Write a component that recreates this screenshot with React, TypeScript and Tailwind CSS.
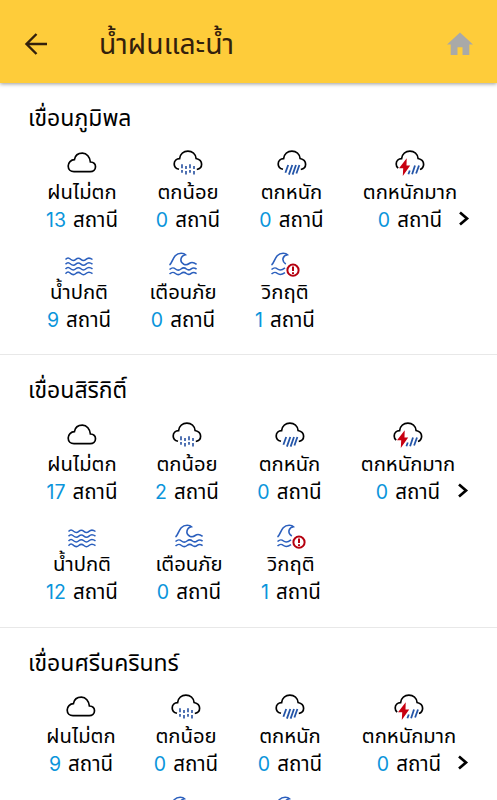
import React from 'react';

type IconName = 'cloud' | 'drizzle' | 'rain' | 'storm' | 'calm' | 'wave' | 'crisis';

interface Station {
  icon: IconName;
  count: number;
  cell: string;
}

interface Dam {
  name: string;
  rain: Station[];
  water: Station[];
}

const LABELS: Record<IconName, string> = {
  cloud: 'ฝนไม่ตก',
  drizzle: 'ตกน้อย',
  rain: 'ตกหนัก',
  storm: 'ตกหนักมาก',
  calm: 'น้ำปกติ',
  wave: 'เตือนภัย',
  crisis: 'วิกฤติ',
};

const dams: Dam[] = [
  {
    name: 'เขื่อนภูมิพล',
    rain: [
      { icon: 'cloud', count: 13, cell: 'w-[106px]' },
      { icon: 'drizzle', count: 0, cell: 'w-[106px]' },
      { icon: 'rain', count: 0, cell: 'w-[101px]' },
      { icon: 'storm', count: 0, cell: 'ml-5 w-24' },
    ],
    water: [
      { icon: 'calm', count: 9, cell: 'w-[100px]' },
      { icon: 'wave', count: 0, cell: 'w-[108px]' },
      { icon: 'crisis', count: 1, cell: 'w-24' },
    ],
  },
  {
    name: 'เขื่อนสิริกิติ์',
    rain: [
      { icon: 'cloud', count: 17, cell: 'w-[106px]' },
      { icon: 'drizzle', count: 2, cell: 'w-[104px]' },
      { icon: 'rain', count: 0, cell: 'w-[101px]' },
      { icon: 'storm', count: 0, cell: 'ml-5 w-24' },
    ],
    water: [
      { icon: 'calm', count: 12, cell: 'w-[106px]' },
      { icon: 'wave', count: 0, cell: 'w-[108px]' },
      { icon: 'crisis', count: 1, cell: 'w-24' },
    ],
  },
  {
    name: 'เขื่อนศรีนครินทร์',
    rain: [
      { icon: 'cloud', count: 9, cell: 'w-[104px]' },
      { icon: 'drizzle', count: 0, cell: 'w-[106px]' },
      { icon: 'rain', count: 0, cell: 'w-[102px]' },
      { icon: 'storm', count: 0, cell: 'ml-5 w-24' },
    ],
    water: [
      { icon: 'calm', count: 9, cell: 'w-[100px]' },
      { icon: 'wave', count: 0, cell: 'w-[105px]' },
      { icon: 'crisis', count: 1, cell: 'w-[106px]' },
    ],
  },
];

const StationIcon: React.FC<{ name: IconName }> = ({ name }) => (
  <svg width="30" height="26" viewBox="0 0 30 26" fill="none" strokeWidth="1.7" className="overflow-visible">
    {name === 'cloud' && (
      <path
        d="M7 21.6H23.2C26.2 21.6 28.5 19.7 28.5 16.8C28.5 13.9 26.4 12.2 23.4 12C22.9 7.1 19.8 3.2 15.4 3.2C11.2 3.2 8.1 5.7 7.4 9.7C4 9.7 1.2 12.6 1.2 15.9C1.2 19.3 3.7 21.6 7 21.6Z"
        stroke="#000"
      />
    )}
    {(name === 'drizzle' || name === 'rain') && (
      <path
        d="M6 19.3C3.2 18.6 1.2 16.6 1.2 13.9C1.2 10.9 3.6 8.7 6.6 8.6C7.2 4.2 10.6 1.2 14.9 1.2C19.3 1.2 22.6 4.2 23.1 8.5C26.4 9.2 28.6 11.4 28.6 14.3C28.6 17 26.7 19 23.8 19.5"
        stroke="#000"
      />
    )}
    {name === 'drizzle' && (
      <path
        d="M9 14.3v4M9 20v2.7M13 16v3M13 21v3.5M17 14.3v4M17 20v2.7M21 16v3M21 21v3.5"
        stroke="#3159a5"
        strokeWidth="1.7"
      />
    )}
    {name === 'rain' && (
      <path d="M11.2 15L8.4 22.8M15.3 15L11.9 24.6M19 15L15.6 24.6M22.4 15L19.4 23.5" stroke="#2455a8" strokeWidth="1.8" />
    )}
    {name === 'storm' && (
      <>
        <path
          d="M3.2 18.2C1.9 17.2 1.2 15.6 1.2 13.9C1.2 10.9 3.6 8.7 6.6 8.6C7.2 4.2 10.6 1.2 14.9 1.2C19.3 1.2 22.6 4.2 23.1 8.5C26.4 9.2 28.6 11.4 28.6 14.3C28.6 17 27.2 18.8 25 19.5"
          stroke="#000"
        />
        <path d="M11.7 8.3L4 18.2H8.2L7.8 26L15.2 15.5H11.5Z" fill="#c80010" />
        <path d="M14.8 20.5L13.4 24.2M20 15.5L17.1 24.2M24 15.5L21.1 23.5" stroke="#2455a8" strokeWidth="1.8" />
      </>
    )}
    {name === 'calm' && (
      <path
        d="M1.5 7.6C3.4 5.5 4.7 5.5 6.6 7.3C8.6 9.1 10 9.1 11.8 7.4C13.7 5.7 15 5.7 16.9 7.4C18.8 9.1 20.2 9.1 22 7.4C23.9 5.6 25.9 5.6 28.5 7.5M1.5 12.3C3.4 10.2 4.7 10.2 6.6 12C8.6 13.8 10 13.8 11.8 12.1C13.7 10.4 15 10.4 16.9 12.1C18.8 13.8 20.2 13.8 22 12.1C23.9 10.3 25.9 10.3 28.5 12.2M1.5 17C3.4 14.9 4.7 14.9 6.6 16.7C8.6 18.5 10 18.5 11.8 16.8C13.7 15.1 15 15.1 16.9 16.8C18.8 18.5 20.2 18.5 22 16.8C23.9 15 25.9 15 28.5 16.9M1.5 21.7C3.4 19.6 4.7 19.6 6.6 21.4C8.6 23.2 10 23.2 11.8 21.5C13.7 19.8 15 19.8 16.9 21.5C18.8 23.2 20.2 23.2 22 21.5C23.9 19.7 25.9 19.7 28.5 21.6"
        stroke="#2b5fbd"
        strokeWidth="1.5"
      />
    )}
    {name === 'wave' && (
      <path
        d="M1.5 13C4.8 10.8 4.8 1.2 13.2 1.2C15.2 1.2 16.6 1.6 17.5 2.7C12.6 3.6 11 9.8 15.8 12.2C18.4 13.4 19.8 12.6 21.2 11.5C23.2 9.9 25.8 10.2 28.6 12.3M1.5 17.5C4.1 15.2 5.3 15.2 7.5 17C9.6 18.7 11 18.6 13 17C15.1 15.3 16.4 15.3 18.4 17C20.3 18.6 21.5 18.3 23.2 16.8C25 15.4 26.6 15.7 28.6 17.2M1.5 22C4.1 19.7 5.3 19.7 7.5 21.5C9.6 23.2 11 23.1 13 21.5C15.1 19.8 16.4 19.8 18.4 21.5C20.3 23.1 21.5 22.8 23.2 21.3C25 19.9 26.6 20.2 28.6 21.7"
        stroke="#2b5fbd"
        strokeWidth="1.6"
      />
    )}
    {name === 'crisis' && (
      <>
        <path
          d="M1.5 13C4.8 10.8 4.8 1.2 13.2 1.2C15.2 1.2 16.6 1.6 17.5 2.7C12.6 3.6 11 8.8 15.8 12M1.5 17.5C4.1 15.2 5.3 15.2 7.5 17C9.6 18.7 11.5 18.6 15 15.8M1.5 22C4.1 19.7 5.3 19.7 7.5 21.5C9.6 23.2 11.8 22.8 15 20.7"
          stroke="#2b5fbd"
          strokeWidth="1.6"
        />
        <circle cx="23" cy="18.2" r="5.6" fill="#fff" stroke="#b5000f" strokeWidth="2" />
        <path d="M23 14.5v4.5M23 20.2v1.8" stroke="#b5000f" strokeWidth="2" />
      </>
    )}
  </svg>
);

const StationCell: React.FC<{ station: Station }> = ({ station }) => (
  <div className={`flex shrink-0 flex-col items-center whitespace-nowrap ${station.cell}`}>
    <StationIcon name={station.icon} />
    <div className="h-7 text-[20.3px] leading-7">{LABELS[station.icon]}</div>
    <div className="flex h-7 gap-[7px] leading-7">
      <span className="text-[19.5px] text-[#0b95db]">{station.count}</span>
      <span className="text-[20.5px]">สถานี</span>
    </div>
  </div>
);

const DamSection: React.FC<{ dam: Dam }> = ({ dam }) => (
  <section className="h-[272.3px] border-b border-[#e8e8e8] px-7">
    <h2 className="h-[66.5px] pt-[19px] text-[23px] leading-8">{dam.name}</h2>
    <div className="flex h-[102px] pl-px [&>div>svg]:mb-0.5">
      {dam.rain.map((s) => (
        <StationCell key={s.icon} station={s} />
      ))}
      <svg width="12" height="15" viewBox="0 0 12 15" className="mt-[61px] ml-auto shrink-0" fill="none">
        <path d="M2 1.5L9 7.5L2 13.5" stroke="#000" strokeWidth="2.7" />
      </svg>
    </div>
    <div className="flex pl-px">
      {dam.water.map((s) => (
        <StationCell key={s.icon} station={s} />
      ))}
    </div>
  </section>
);

const App: React.FC = () => (
  <div className="flex h-screen flex-col bg-white font-['Inter','Noto_Sans_Thai',sans-serif] text-black">
    <header className="z-10 flex h-[83px] shrink-0 items-center bg-[#fecc3a] px-[24px] pt-[5px] shadow-[0_1px_4px_rgba(0,0,0,0.4)]">
      <svg width="24" height="24" viewBox="0 0 24 24" fill="none">
        <path d="M23 12H3M12.5 2L2.5 12L12.5 22" stroke="#33200c" strokeWidth="2.4" />
      </svg>
      <h1 className="ml-[51px] text-[28.3px] text-[#33200c]">น้ำฝนและน้ำ</h1>
      <svg width="26" height="24" viewBox="0 0 26 24" className="ml-auto">
        <path d="M13 0.5L0 12.5H3.7V23H10.5V15.3H15.5V23H22.3V12.5H26Z" fill="#a9a9a8" />
      </svg>
    </header>
    <main className="min-h-0 flex-1 overflow-y-auto [scrollbar-width:none]">
      {dams.map((dam) => (
        <DamSection key={dam.name} dam={dam} />
      ))}
    </main>
  </div>
);

export default App;
